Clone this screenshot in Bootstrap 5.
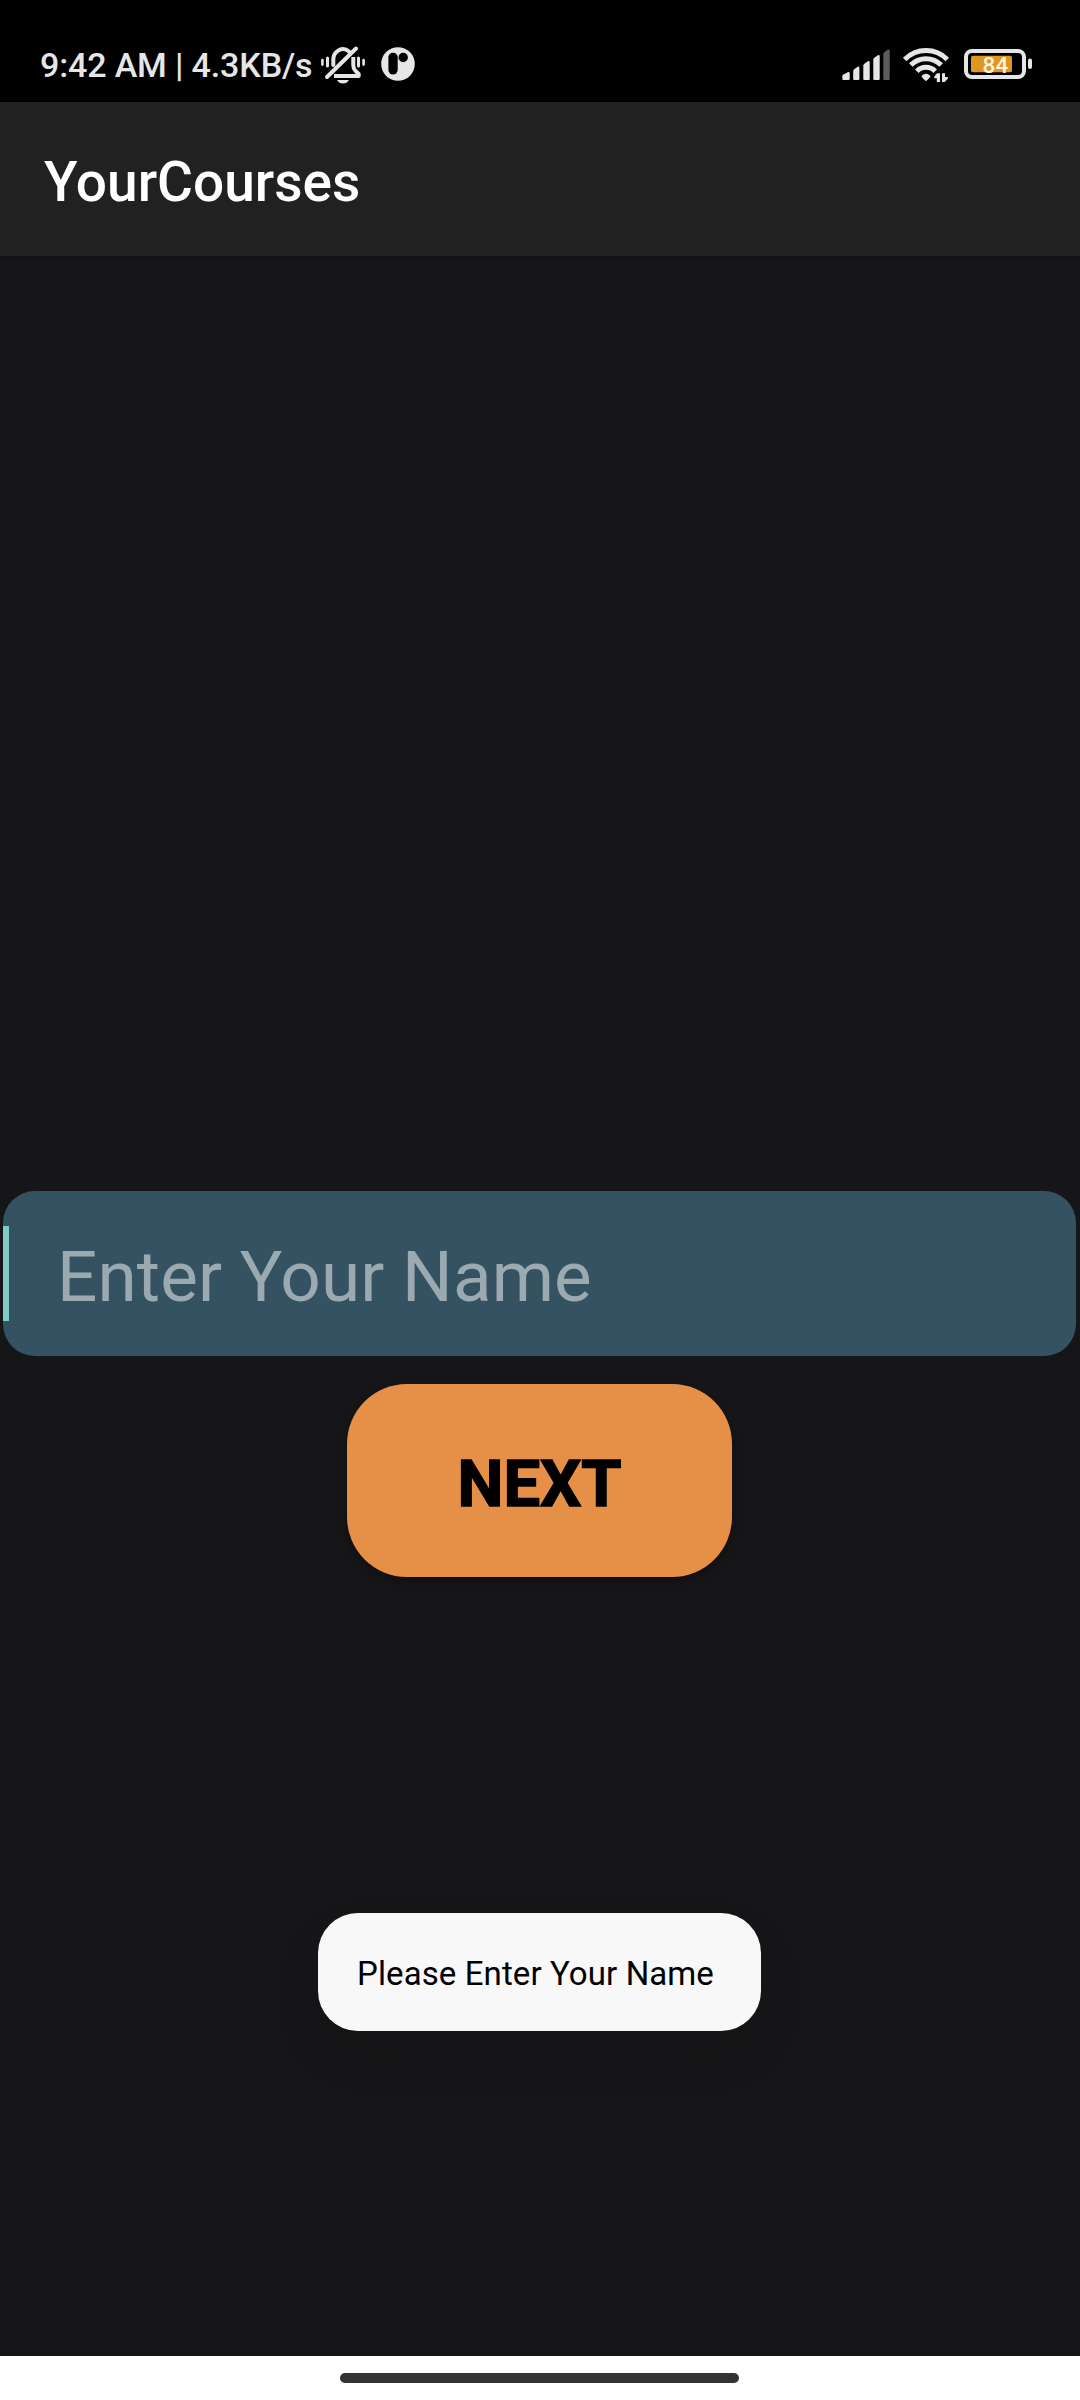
<!DOCTYPE html>
<html lang="en">
<head>
<meta charset="utf-8">
<meta name="viewport" content="width=device-width, initial-scale=1">
<title>YourCourses</title>
<link href="https://cdn.jsdelivr.net/npm/bootstrap@5.3.0/dist/css/bootstrap.min.css" rel="stylesheet">
<style>
  body { font-family: Roboto, "Liberation Sans", sans-serif; background: #161618; }
  .screen { height: 2400px; overflow: hidden; }
  .status { height: 102px; background: #000; color: #e6e6e6; padding: 28px 48px 0 40px; }
  .status-text { font-size: 34px; font-weight: 500; line-height: 74px; letter-spacing: -.14px; white-space: nowrap; width: 280px; }
  .status svg { display: block; flex: none; }
  .bell-icon { margin-top: 14px; }
  .p-icon { margin: 19px 0 0 15px; }
  .signal-icon { margin-top: 14px; }
  .battery-icon { margin: 21px 0 0 14px; }
  .app-bar { height: 154px; background: #212121; padding: 6px 44px 0; box-shadow: 0 1px 4px rgba(0,0,0,.2); }
  .app-title { font-size: 55px; font-weight: 500; line-height: 74px; color: #fff; }
  .form-area { padding: 935px 4px 0 3px; }
  .name-field, .name-field:focus { height: 165px; border: 0; border-radius: 32px; background: #355262; box-shadow: none; padding: 6px 0 0 54px; font-size: 71px; letter-spacing: .12px; line-height: 96px; color: #fff; }
  .name-field::placeholder { color: #9ba9b1; opacity: 1; }
  .caret { left: 0; top: 35px; width: 6px; height: 95px; background: #80cbc4; }
  .next-btn, .next-btn:hover { width: 385px; height: 193px; margin-top: 28px; border: 0; border-radius: 60px; background: #e68f47; color: #000; font-size: 65px; font-weight: 700; line-height: 80px; -webkit-text-stroke: 1.5px #000; padding: 6px 0 0; box-shadow: 0 4px 8px rgba(0,0,0,.3); }
  .toast-msg { width: 443px; height: 118px; margin-top: 336px; border-radius: 40px; background: #f8f8f8; color: #000; font-size: 33px; letter-spacing: .1px; line-height: 40px; padding: 3px 8px 0 0; box-shadow: 0 24px 50px rgba(0,0,0,.08); }
  .nav-strip { height: 44px; background: #fff; padding: 17px 1px 0 0; }
  .nav-pill { width: 399px; height: 10px; border-radius: 5px; background: #333; }
</style>
</head>
<body>
<div class="screen d-flex flex-column">
  <div class="status d-flex align-items-start">
    <div class="status-text">9:42 AM | 4.3KB/s</div>
    <!-- muted bell with vibration marks -->
    <svg class="bell-icon" width="46" height="46" viewBox="320 42 46 46" fill="none" stroke="#e6e6e6" stroke-linecap="round" stroke-linejoin="round">
      <path stroke-width="2.6" d="M322.4 60v4.6M363.6 60v4.6"/>
      <path stroke-width="3" d="M327.5 58v8M358.5 58v8"/>
      <path stroke-width="4" d="M333.3 65V59.500A9.700 10.500 0 0 1 349 51.400"/>
      <path stroke-width="4" d="M327 77 356 48.500"/>
      <path stroke-width="4" stroke-linecap="butt" d="M353.300 57V65.500Q353.300 68.500 355.500 70.800L358.700 74V76H334"/>
      <path fill="#e6e6e6" stroke="none" d="M337 80H349Q347 83.500 343 83.500T337 80Z"/>
    </svg>
    <svg class="p-icon" width="34" height="34" viewBox="381 47.300 34 34">
      <circle cx="398" cy="64.300" r="16.800" fill="#e6e6e6"/>
      <rect x="388.400" y="53" width="9.300" height="21.800" rx="4.650"/>
      <circle cx="403.200" cy="57.800" r="4.700"/>
    </svg>
    <svg class="signal-icon ms-auto" width="108" height="46" viewBox="842 42 108 46">
      <g fill="#e6e6e6">
        <path d="M842.300 79V76Q842.300 75.300 843 74.800L847.700 72.200Q849.700 71.500 849.700 73.500V79Q849.700 80 848.700 80H843.300Q842.300 80 842.300 79Z"/>
        <path d="M853.200 79V71Q853.200 70 854 69.500L857.600 66.800Q859.400 66 859.400 68V79Q859.400 80 858.400 80H854.200Q853.200 80 853.200 79Z"/>
        <path d="M863.300 79V65.500Q863.300 64.500 864 64L867.900 61.200Q869.700 60.500 869.700 62.500V79Q869.700 80 868.700 80H864.300Q863.300 80 863.300 79Z"/>
        <path d="M873.300 79V59.500Q873.300 58.500 874 58L877.900 55.300Q879.700 54.500 879.700 56.500V79Q879.700 80 878.700 80H874.300Q873.300 80 873.300 79Z"/>
        <path fill="#5c5c5c" d="M883.300 79V54Q883.300 53 884 52.400L887.900 49.600Q889.700 48.800 889.700 51V79Q889.700 80 888.700 80H884.300Q883.300 80 883.300 79Z"/>
        <path d="M921.700 75.800Q926 71.500 930.300 75.800V77L926.900 80.600Q926 81.300 925.100 80.600L921.700 77Z"/>
        <path d="M937 73.300H940V82H936.800V78.300H934.300V76.500ZM942 73.300H945V77H947.800V78.700L944.800 82H942Z"/>
      </g>
      <g fill="none" stroke="#e6e6e6" stroke-width="5">
        <path d="M904.700 59.400A29.700 29.700 0 0 1 947.300 59.400"/>
        <path d="M910.800 65A21.400 21.400 0 0 1 941.200 65"/>
        <path d="M916.800 71.200A12.900 12.900 0 0 1 935.200 71.200"/>
      </g>
    </svg>
    <svg class="battery-icon" width="68" height="30" viewBox="964 49 68 30">
      <rect x="966" y="51" width="58" height="26" rx="6" fill="none" stroke="#e6e6e6" stroke-width="4"/>
      <rect x="971" y="55.700" width="41" height="16.500" rx="2" fill="#dd9722"/>
      <rect x="1028" y="58.500" width="4" height="10.500" rx="2" fill="#e6e6e6"/>
      <text x="995.400" y="72.500" text-anchor="middle" font-size="22.500" font-weight="500" fill="#fff3dc">84</text>
    </svg>
  </div>

  <nav class="app-bar d-flex align-items-center">
    <span class="app-title">YourCourses</span>
  </nav>

  <main class="form-area flex-grow-1 d-flex flex-column align-items-center">
    <div class="position-relative w-100">
      <input type="text" class="form-control name-field" placeholder="Enter Your Name" aria-label="Enter Your Name">
      <span class="caret position-absolute"></span>
    </div>
    <button type="button" class="btn next-btn">NEXT</button>
    <div class="toast-msg d-flex align-items-center justify-content-center" role="status">Please Enter Your Name</div>
  </main>

  <div class="nav-strip d-flex justify-content-center">
    <div class="nav-pill"></div>
  </div>
</div>
<script src="https://cdn.jsdelivr.net/npm/bootstrap@5.3.0/dist/js/bootstrap.bundle.min.js"></script>
</body>
</html>
